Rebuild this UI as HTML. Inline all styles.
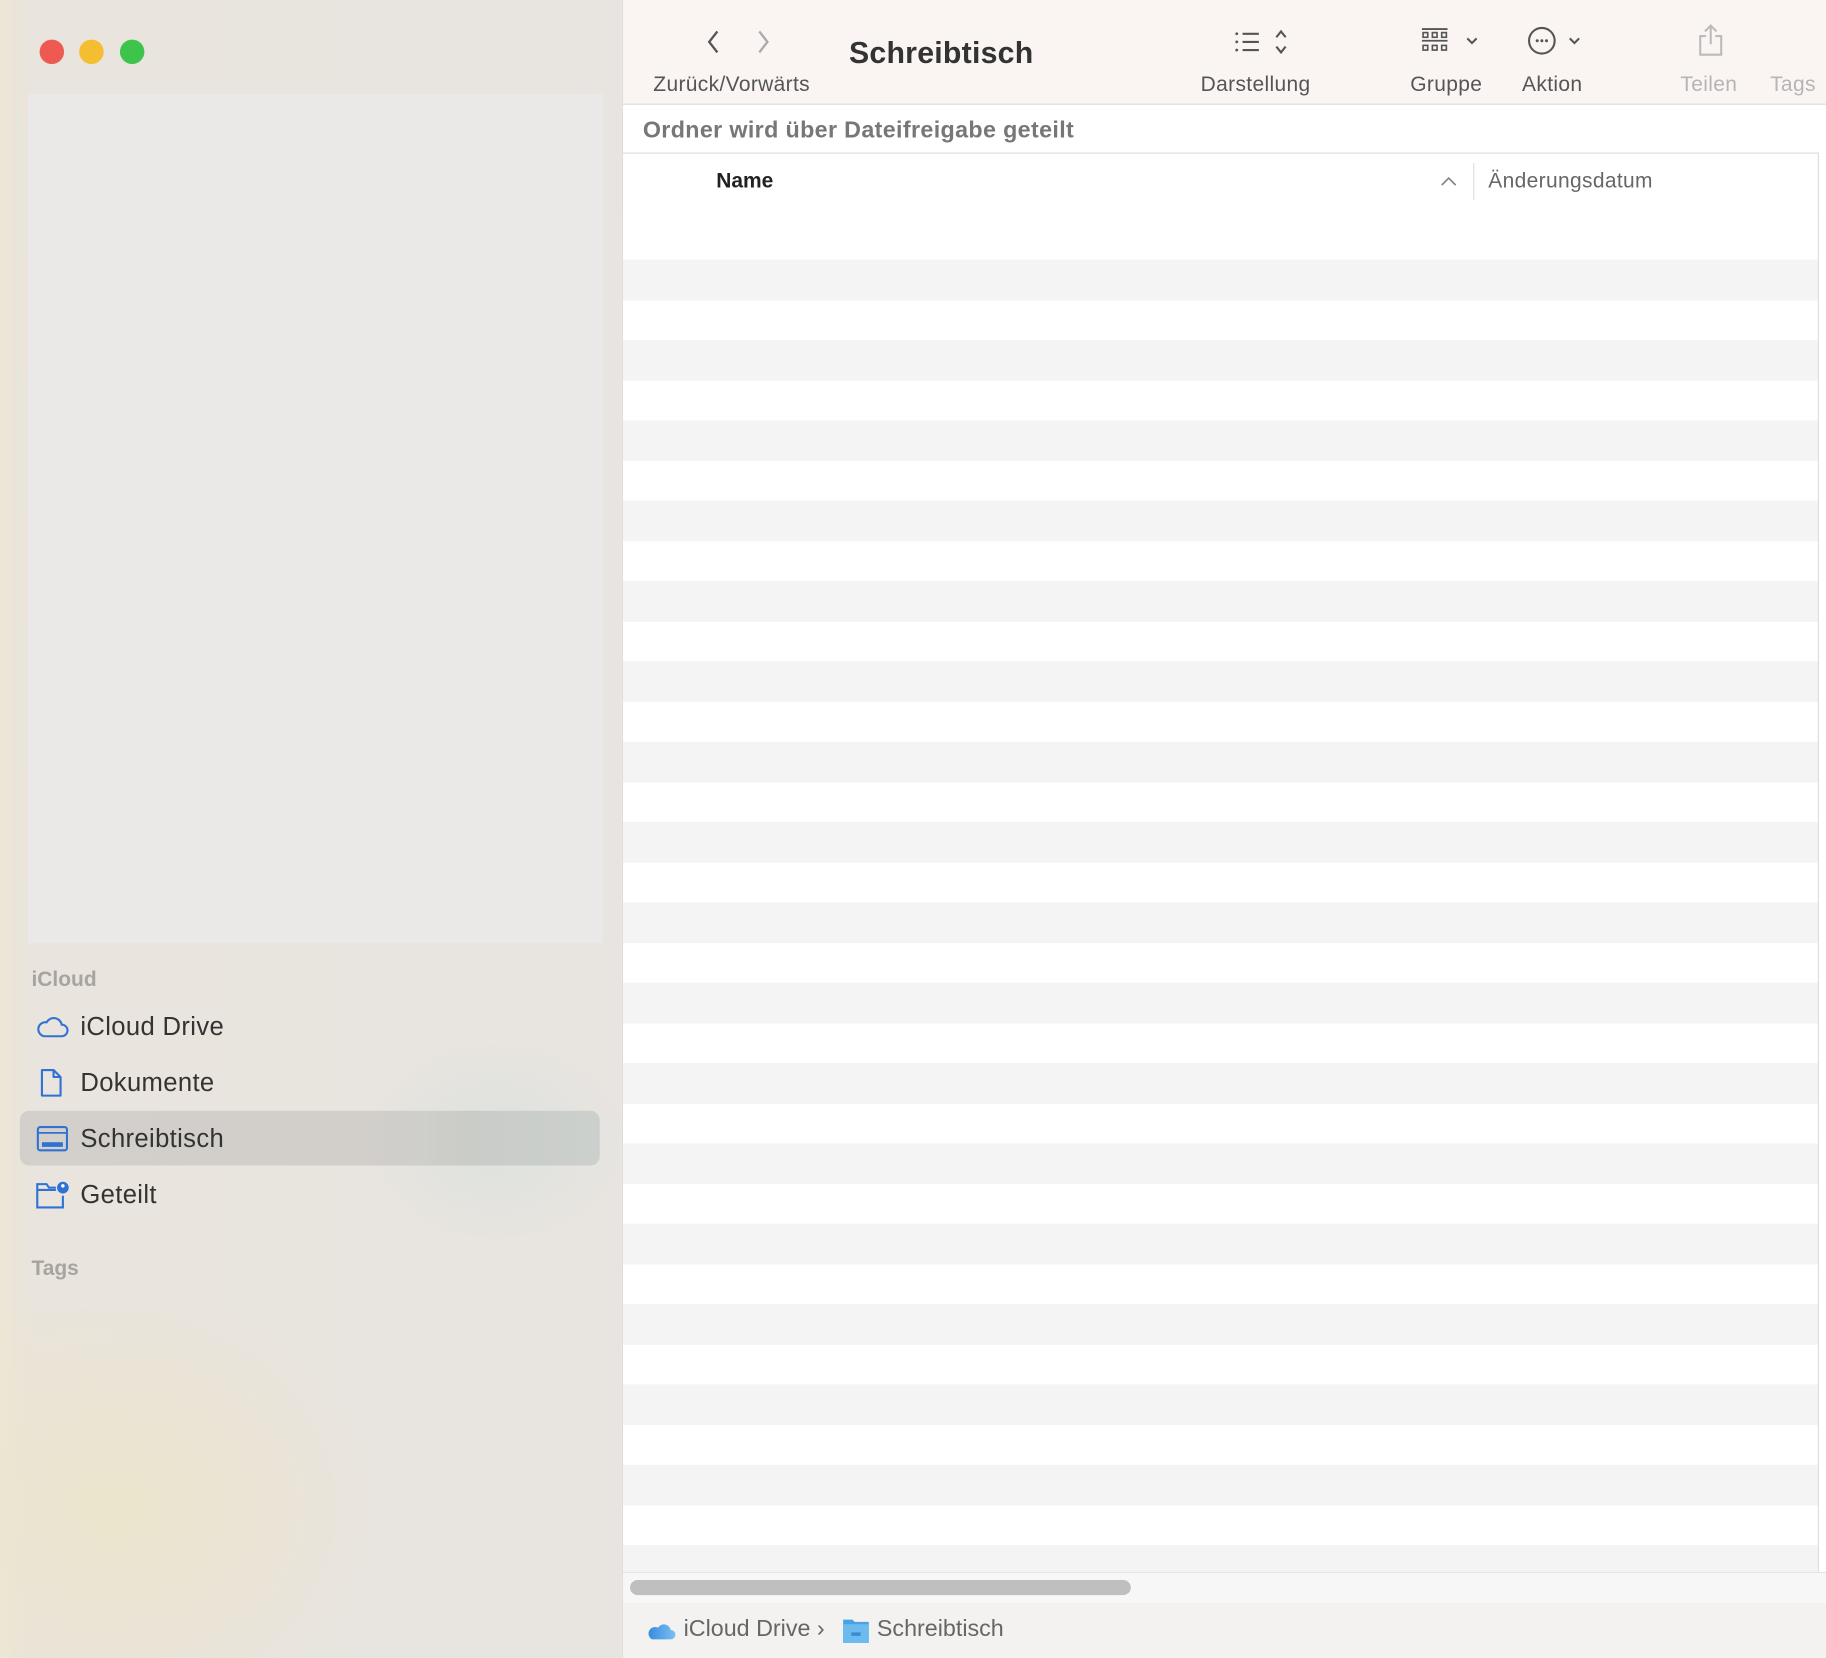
<!DOCTYPE html>
<html><head><meta charset="utf-8"><style>
html,body{margin:0;padding:0;width:1826px;height:1658px;overflow:hidden;background:#f0ede8}
#w{position:absolute;left:0;top:0;width:1568px;height:1424px;transform:scale(1.16454,1.16433);transform-origin:0 0;font-family:"Liberation Sans",sans-serif}
.sb{position:absolute;left:0;top:0;width:534px;height:1424px;background:linear-gradient(90deg,#ece6d6 0,#e9e4dd 30px,#e8e4e0 100%)}
.glow{position:absolute;left:310px;top:890px;width:230px;height:180px;border-radius:50%;background:radial-gradient(#dde2de,rgba(232,228,224,0) 70%)}
.yel{position:absolute;left:0;top:1100px;width:330px;height:324px;background:radial-gradient(ellipse at 30% 60%,#ebe5cc,rgba(232,228,224,0) 70%)}
.dot{position:absolute;top:34px;width:21px;height:21px;border-radius:50%}
.blank{position:absolute;left:24px;top:81px;width:494px;height:729px;background:#eae9e8}
.sec{position:absolute;left:27px;font-size:18px;font-weight:bold;color:#a7a49f}
.it{position:absolute;left:69px;font-size:22px;color:#333;letter-spacing:0.3px}
.sel{position:absolute;left:17px;top:954px;width:498px;height:47px;border-radius:8px;background:linear-gradient(90deg,#d3cfca 0,#d2cfcb 60%,#c9ccc8 80%,#ccd0cc)}
.main{position:absolute;left:534px;top:0;width:1034px;height:1424px;background:#fff;border-left:1px solid #ddd}
.tb{position:absolute;left:0;top:0;width:1034px;height:89px;background:#faf5f2;border-bottom:1px solid #ddd}
.lbl{position:absolute;top:62px;font-size:18px;color:#555;letter-spacing:0.3px}
.rows{position:absolute;left:0;top:180px;width:1026px;height:1170px;background:#fff}
.stripe{position:absolute;left:0;width:1026px;height:34.5px;background:#f4f4f4}
</style></head><body><div id="w">
<div class="sb"><div class="yel"></div><div class="glow"></div>
<div class="dot" style="left:34px;background:#ee5a52"></div>
<div class="dot" style="left:68px;background:#f4be30"></div>
<div class="dot" style="left:103px;background:#3ec44a"></div>
<div class="blank"></div>
<div class="sec" style="top:831px">iCloud</div>
<div class="sel"></div>
<svg style="position:absolute;left:30px;top:870px" width="30" height="24" viewBox="0 0 30 24"><path d="M8 20h15a5 5 0 0 0 0-10 7 7 0 0 0-13-2 6 6 0 0 0-2 12z" fill="none" stroke="#2f72d4" stroke-width="1.8"/></svg>
<div class="it" style="top:869px">iCloud Drive</div>
<svg style="position:absolute;left:34px;top:917px" width="22" height="26" viewBox="0 0 22 26"><path d="M2 2h10l6 6v16H2z M12 2v6h6" fill="none" stroke="#2f72d4" stroke-width="1.8" stroke-linejoin="round"/></svg>
<div class="it" style="top:917px">Dokumente</div>
<svg style="position:absolute;left:31px;top:966px" width="28" height="24" viewBox="0 0 28 24"><rect x="1.5" y="2" width="25" height="20" rx="2" fill="none" stroke="#2f72d4" stroke-width="1.8"/><path d="M1.5 7h25" stroke="#2f72d4" stroke-width="1.5"/><rect x="5" y="15" width="18" height="4" fill="#2f72d4"/></svg>
<div class="it" style="top:965px">Schreibtisch</div>
<svg style="position:absolute;left:30px;top:1013px" width="32" height="26" viewBox="0 0 32 26"><path d="M18 7H12l-2-3H2v20h22v-10M2 9h16" fill="none" stroke="#2f72d4" stroke-width="1.8"/><circle cx="24" cy="7" r="5" fill="#2f72d4"/><circle cx="24" cy="5.5" r="1.5" fill="#fff"/></svg>
<div class="it" style="top:1013px">Geteilt</div>
<div class="sec" style="top:1079px">Tags</div>
</div>
<div class="main">
<div class="tb">
<svg style="position:absolute;left:70px;top:24px" width="60" height="24" viewBox="0 0 60 24"><path d="M11 3l-7 9 7 9" fill="none" stroke="#555" stroke-width="2"/><path d="M47 3l7 9-7 9" fill="none" stroke="#aaa" stroke-width="2"/></svg>
<div style="position:absolute;left:194px;top:30px;font-size:26px;font-weight:bold;color:#333;letter-spacing:0.2px">Schreibtisch</div>
<div class="lbl" style="left:26px">Zurück/Vorwärts</div>
<svg style="position:absolute;left:524px;top:24px" width="56" height="24" viewBox="0 0 56 24"><g fill="#555"><circle cx="3" cy="5" r="1.2"/><circle cx="3" cy="12" r="1.2"/><circle cx="3" cy="19" r="1.2"/></g><path d="M8 5h14M8 12h14M8 19h14" stroke="#555" stroke-width="1.8"/><path d="M37 8l4-5 4 5M37 16l4 5 4-5" fill="none" stroke="#555" stroke-width="1.8"/></svg>
<div class="lbl" style="left:496px">Darstellung</div>
<svg style="position:absolute;left:684px;top:22px" width="58" height="26" viewBox="0 0 58 26"><path d="M2 3h22M2 13h22" stroke="#555" stroke-width="1.6"/><g fill="none" stroke="#555" stroke-width="1.4"><rect x="3" y="6" width="4" height="4"/><rect x="11" y="6" width="4" height="4"/><rect x="19" y="6" width="4" height="4"/><rect x="3" y="17" width="4" height="4"/><rect x="11" y="17" width="4" height="4"/><rect x="19" y="17" width="4" height="4"/></g><path d="M41 11l4 4 4-4" fill="none" stroke="#555" stroke-width="1.8"/></svg>
<div class="lbl" style="left:676px">Gruppe</div>
<svg style="position:absolute;left:776px;top:22px" width="54" height="26" viewBox="0 0 54 26"><circle cx="13" cy="13" r="11" fill="none" stroke="#555" stroke-width="1.8"/><g fill="#555"><circle cx="9" cy="13" r="1.3"/><circle cx="13" cy="13" r="1.3"/><circle cx="17" cy="13" r="1.3"/></g><path d="M37 11l4 4 4-4" fill="none" stroke="#555" stroke-width="1.8"/></svg>
<div class="lbl" style="left:772px">Aktion</div>
<svg style="position:absolute;left:922px;top:20px" width="24" height="30" viewBox="0 0 24 30"><path d="M12 2v16M7 7l5-5 5 5M8 11H3v16h18V11h-5" fill="none" stroke="#bbb" stroke-width="1.8"/></svg>
<div class="lbl" style="left:908px;color:#b5b5b5">Teilen</div>
<div class="lbl" style="left:985px;color:#b5b5b5">Tags</div>
</div>
<div style="position:absolute;left:17px;top:101px;font-size:20px;font-weight:bold;color:#777;letter-spacing:0.3px">Ordner wird über Dateifreigabe geteilt</div>
<div style="position:absolute;left:0;top:131px;width:1026px;height:48px;border-top:1px solid #ddd;border-bottom:1px solid #ddd;border-right:1px solid #ddd">
<div style="position:absolute;left:80px;top:13px;font-size:18px;font-weight:bold;color:#222">Name</div>
<svg style="position:absolute;left:702px;top:19px" width="14" height="10"><path d="M1 8l6-6 6 6" fill="none" stroke="#888" stroke-width="1.5"/></svg>
<div style="position:absolute;left:730px;top:8px;width:1px;height:32px;background:#ddd"></div>
<div style="position:absolute;left:743px;top:13px;font-size:18px;color:#666;letter-spacing:0.3px">Änderungsdatum</div>
</div>
<div class="rows" id="rows"></div>
<div style="position:absolute;left:1026px;top:131px;width:8px;height:1293px;background:#fff;border-left:1px solid #ddd"></div>
<div style="position:absolute;left:0;top:1350px;width:1034px;height:26px;background:#f7f7f7;border-top:1px solid #e4e4e4;border-bottom:1px solid #e4e4e4"></div>
<div style="position:absolute;left:6px;top:1357px;width:430px;height:13px;border-radius:7px;background:#bfbfbf"></div>
<div style="position:absolute;left:0;top:1377px;width:1034px;height:47px;background:#f3f2f1"></div>
<svg style="position:absolute;left:20px;top:1389px" width="26" height="22" viewBox="0 0 26 22"><defs><linearGradient id="g" x1="0" x2="1"><stop offset="0" stop-color="#3a8be0"/><stop offset="1" stop-color="#7cc0f0"/></linearGradient></defs><path d="M5 19h16a4 4 0 0 0 0-8 6 6 0 0 0-11-2 5 5 0 0 0-5 10z" fill="url(#g)"/></svg>
<div style="position:absolute;left:52px;top:1388px;font-size:20px;color:#666">iCloud Drive ›</div>
<svg style="position:absolute;left:188px;top:1388px" width="24" height="24" viewBox="0 0 24 24"><path d="M1 3h8l2 2h12v18H1z" fill="#4aa3e0"/><rect x="1" y="7" width="22" height="16" fill="#6bbbee"/><rect x="8" y="14" width="8" height="3" fill="#3a8bd0"/></svg>
<div style="position:absolute;left:218px;top:1388px;font-size:20px;color:#666">Schreibtisch</div>
</div>
</div>
<script>
var r=document.getElementById('rows'),h='';
for(var y=43;y<1170;y+=69){h+='<div class="stripe" style="top:'+y+'px"></div>';}
r.innerHTML=h;
</script>
</body></html>
